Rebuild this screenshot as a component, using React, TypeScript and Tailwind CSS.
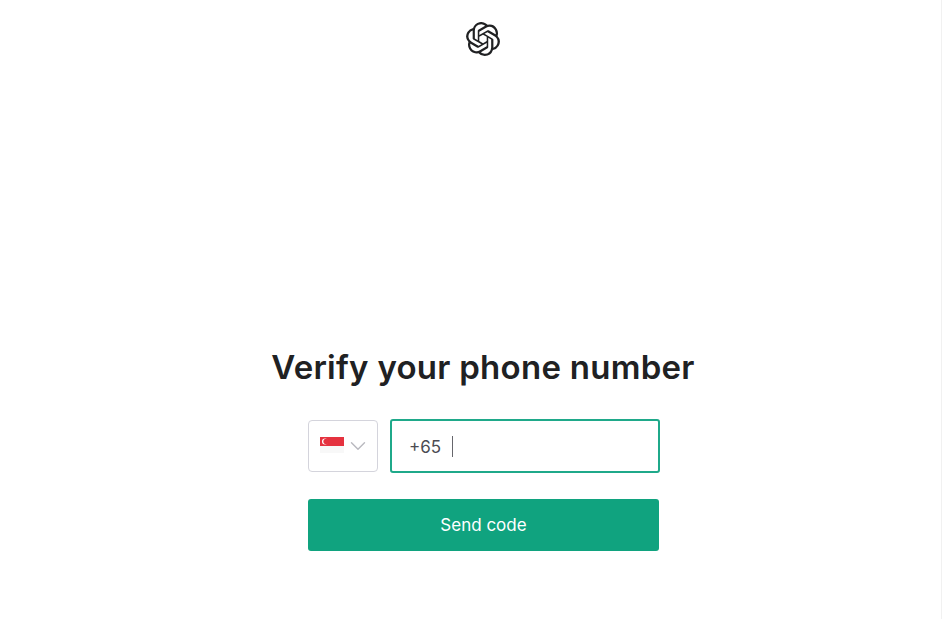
import React from "react";
import { SiOpenai } from "react-icons/si";
import { ChevronDown } from "lucide-react";

const SingaporeFlag = () => (
  <svg width="24" height="18" viewBox="0 0 24 18" className="block">
    <rect x="0" y="0" width="24" height="9" fill="#e5323f" />
    <rect x="0" y="9" width="24" height="7" fill="#f8f8f8" />
    <circle cx="5" cy="4.5" r="3" fill="#fff" />
    <circle cx="6.2" cy="4.5" r="2.8" fill="#e5323f" />
  </svg>
);

const App = () => {
  return (
    <div className="flex flex-col items-center h-[619px] w-[942px] pl-[27px] overflow-hidden bg-white border-r border-[#f1f1f1] font-['Inter','Liberation_Sans',sans-serif]">
      <div className="mt-[22px] h-[34px] -ml-[2px]">
        <SiOpenai size={34} color="#202123" />
      </div>
      <h1 className="mt-[290px] -ml-[2px] text-[33px] leading-[42px] font-semibold text-[#202123] tracking-[0.27px]">
        Verify your phone number
      </h1>
      <div className="mt-[31px] flex items-center gap-[12px] w-[352px]">
        <div className="flex items-center w-[70px] h-[52px] pl-[11px] rounded border border-[#d4d4dc] bg-white">
          <SingaporeFlag />
          <ChevronDown size={26} color="#b9b9bf" strokeWidth={1.3} className="ml-[1px]" />
        </div>
        <div className="flex items-center flex-1 h-[54px] px-[17px] rounded-[3px] border-2 border-[#1fa98a] bg-white">
          <span className="text-[17px] leading-[26px] pt-[1px] text-[#4b4b52]">+65</span>
          <span className="ml-[11px] w-[1px] h-[21px] bg-[#66666c]" />
        </div>
      </div>
      <button className="mt-[26px] w-[351px] h-[52px] -ml-[1px] pt-[1px] rounded-[3px] bg-[#10a37f] text-white text-[17px]">
        Send code
      </button>
    </div>
  );
};

export default App;
